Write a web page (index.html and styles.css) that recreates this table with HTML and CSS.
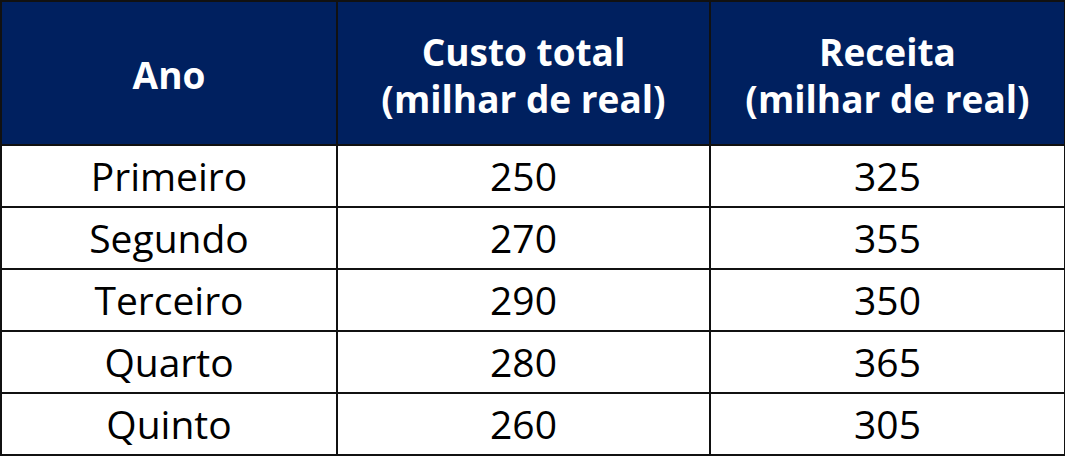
FILE: index.html
```html
<!DOCTYPE html>
<html lang="pt">
<head>
<meta charset="utf-8">
<title>Tabela</title>
<link rel="stylesheet" href="styles.css">
</head>
<body>
<table class="data">
  <colgroup>
    <col class="c1">
    <col class="c2">
    <col class="c3">
  </colgroup>
  <thead>
    <tr>
      <th>Ano</th>
      <th>Custo total<br>(milhar de real)</th>
      <th>Receita<br>(milhar de real)</th>
    </tr>
  </thead>
  <tbody>
    <tr><td>Primeiro</td><td>250</td><td>325</td></tr>
    <tr><td>Segundo</td><td>270</td><td>355</td></tr>
    <tr><td>Terceiro</td><td>290</td><td>350</td></tr>
    <tr><td>Quarto</td><td>280</td><td>365</td></tr>
    <tr><td>Quinto</td><td>260</td><td>305</td></tr>
  </tbody>
</table>
</body>
</html>
```

FILE: styles.css
```css
html, body {
  margin: 0;
  padding: 0;
  background: #ffffff;
}

.data {
  border-collapse: collapse;
  table-layout: fixed;
  width: 1064px;
  font-family: "Open Sans", "Noto Sans", sans-serif;
  color: #000;
}

.c1 { width: 336px; }
.c2 { width: 373px; }
.c3 { width: 355px; }

.data th,
.data td {
  border: 2px solid #111;
  text-align: center;
  padding: 0;
}

.data th {
  background: #00205f;
  color: #ffffff;
  font-weight: 700;
  font-size: 37px;
  line-height: 47px;
  height: 139px;
  padding-top: 3px;
}

.data td {
  font-size: 39px;
  line-height: 50px;
  height: 60px;
}
```
